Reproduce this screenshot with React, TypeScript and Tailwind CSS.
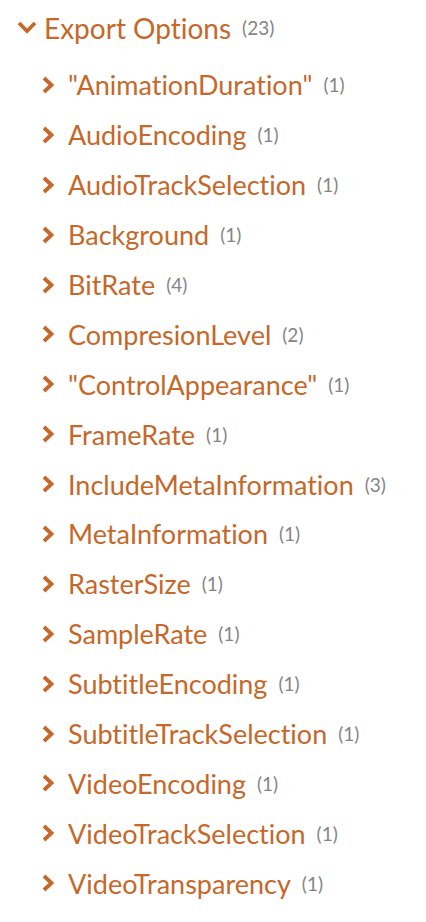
const ITEMS: [string, number][] = [
  ['"AnimationDuration"', 1],
  ["AudioEncoding", 1],
  ["AudioTrackSelection", 1],
  ["Background", 1],
  ["BitRate", 4],
  ["CompresionLevel", 2],
  ['"ControlAppearance"', 1],
  ["FrameRate", 1],
  ["IncludeMetaInformation", 3],
  ["MetaInformation", 1],
  ["RasterSize", 1],
  ["SampleRate", 1],
  ["SubtitleEncoding", 1],
  ["SubtitleTrackSelection", 1],
  ["VideoEncoding", 1],
  ["VideoTrackSelection", 1],
  ["VideoTransparency", 1],
];

function ChevronRight() {
  return (
    <svg width="12" height="18" viewBox="0 0 12 18" className="shrink-0">
      <path d="M2 2 L9.5 9 L2 16" fill="none" stroke="#c5682a" strokeWidth="3.8" strokeLinejoin="miter" />
    </svg>
  );
}

function ChevronDown() {
  return (
    <svg width="20" height="13" viewBox="0 0 20 13" className="shrink-0">
      <path d="M2 2 L10 10 L18 2" fill="none" stroke="#c5682a" strokeWidth="3.8" strokeLinejoin="miter" />
    </svg>
  );
}

export default function App() {
  return (
    <div
      className="min-h-screen bg-white [font-variant-ligatures:none]"
      style={{ fontFamily: "Lato, 'Noto Sans', sans-serif" }}
    >
      <div className="flex items-center h-[54px] pl-[17px] pt-[1px]">
        <ChevronDown />
        <span className="ml-[7px] text-[28px] leading-none text-[#c5682a]">Export Options</span>
        <span className="ml-[11px] text-[19px] leading-none text-[#858585]">(23)</span>
      </div>
      <ul className="pt-[6px]">
        {ITEMS.map(([name, count]) => (
          <li key={name} className="flex items-center h-[49.9px] pl-[42px]">
            <ChevronRight />
            <span className="ml-[14px] text-[27px] leading-none text-[#c5682a]">{name}</span>
            <span className="ml-[11px] text-[19px] leading-none text-[#858585]">({count})</span>
          </li>
        ))}
      </ul>
    </div>
  );
}
